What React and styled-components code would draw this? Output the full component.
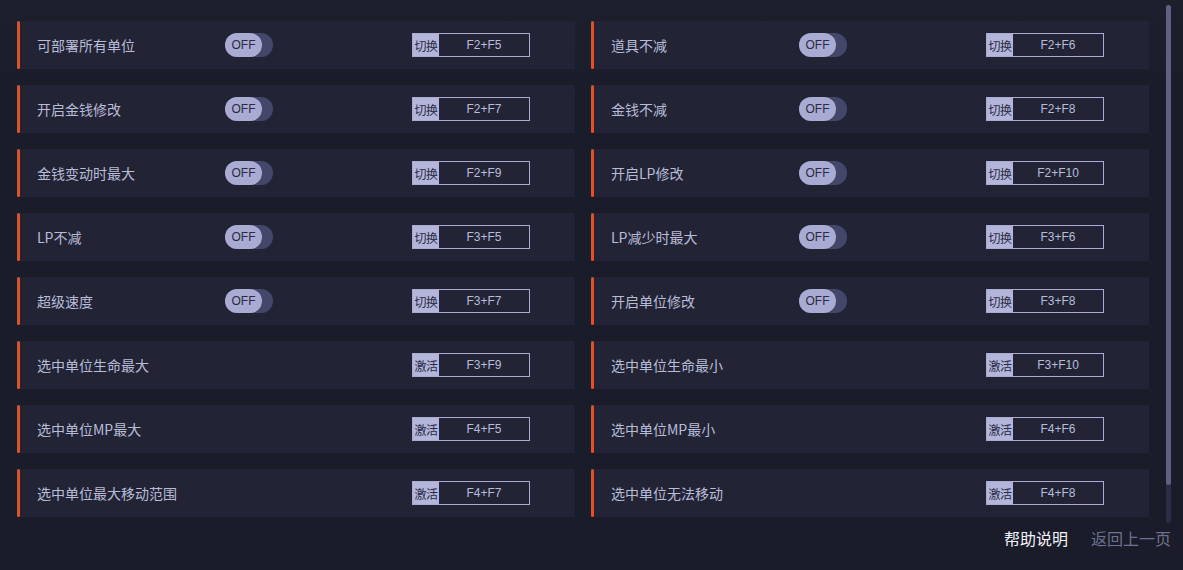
import React from "react";
import styled, { createGlobalStyle } from "styled-components";

const Global = createGlobalStyle`
  html, body { margin: 0; padding: 0; }
  body {
    background: #1a1c2a;
    font-family: "Microsoft YaHei", "Noto Sans CJK SC", "Noto Sans", sans-serif;
    width: 1183px;
    height: 570px;
    overflow: hidden;
  }
`;

const Page = styled.div`
  width: 1183px;
  height: 570px;
  box-sizing: border-box;
  padding-top: 5px;
  background: linear-gradient(180deg, #1d1f2d 0%, #1a1c2a 18%, #1a1c2a 100%);
  display: flex;
  flex-direction: column;
`;

const Main = styled.div`
  display: flex;
  align-items: flex-start;
  gap: 17px;
  padding-left: 17px;
`;

const Grid = styled.div`
  margin-top: 16px;
  display: grid;
  grid-template-columns: 558px 558px;
  column-gap: 16px;
  row-gap: 16px;
`;

const Card = styled.div`
  position: relative;
  height: 48px;
  background: #222436;
  display: flex;
  align-items: center;
  padding-left: 20px;
  box-sizing: border-box;
  &::before {
    content: "";
    position: absolute;
    left: 0;
    top: 0;
    bottom: 0;
    width: 3px;
    border-radius: 2px;
    background: #d9532c;
  }
`;

const Label = styled.div`
  width: 188px;
  font-size: 14px;
  color: #b9bcd6;
  white-space: nowrap;
`;

const Toggle = styled.div`
  width: 48px;
  height: 24px;
  border-radius: 12px;
  background: #44476a;
  display: flex;
  align-items: center;
`;

const Knob = styled.div`
  width: 37px;
  height: 24px;
  border-radius: 12px;
  background: #a9abd3;
  color: #2a2c45;
  font-family: "Liberation Sans", Arial, sans-serif;
  font-size: 12px;
  display: flex;
  align-items: center;
  justify-content: center;
`;

const Spacer = styled.div`
  flex: ${(p) => (p.$grow ? 1 : "none")};
  width: ${(p) => (p.$w ? p.$w + "px" : "auto")};
`;

const Keybind = styled.div`
  margin-left: ${(p) => p.$offset}px;
  width: 118px;
  height: 24px;
  box-sizing: border-box;
  border: 1px solid #a9abd3;
  display: flex;
  align-items: stretch;
`;

const KeyTag = styled.div`
  width: 26px;
  background: #b3b5da;
  color: #2a2c45;
  font-size: 12px;
  display: flex;
  align-items: center;
  justify-content: center;
  white-space: nowrap;
  letter-spacing: -0.5px;
`;

const KeyText = styled.div`
  flex: 1;
  color: #b9bcd6;
  font-family: "Liberation Sans", Arial, sans-serif;
  font-size: 12px;
  display: flex;
  align-items: center;
  justify-content: center;
`;

const ScrollTrack = styled.div`
  width: 5px;
  height: 518px;
  border-radius: 3px;
  background: #2b2d44;
  display: flex;
  flex-direction: column;
`;

const ScrollThumb = styled.div`
  height: 480px;
  border-radius: 3px;
  background: #5e6182;
`;

const Footer = styled.div`
  display: flex;
  justify-content: flex-end;
  gap: 23px;
  padding-right: 12px;
  margin-top: 4px;
`;

const FooterLink = styled.div`
  font-size: 16px;
  line-height: 22px;
  color: ${(p) => (p.$active ? "#f2f3fa" : "#6e7190")};
  cursor: pointer;
`;

const items = [
  ["可部署所有单位", true, "切换", "F2+F5"],
  ["道具不减", true, "切换", "F2+F6"],
  ["开启金钱修改", true, "切换", "F2+F7"],
  ["金钱不减", true, "切换", "F2+F8"],
  ["金钱变动时最大", true, "切换", "F2+F9"],
  ["开启LP修改", true, "切换", "F2+F10"],
  ["LP不减", true, "切换", "F3+F5"],
  ["LP减少时最大", true, "切换", "F3+F6"],
  ["超级速度", true, "切换", "F3+F7"],
  ["开启单位修改", true, "切换", "F3+F8"],
  ["选中单位生命最大", false, "激活", "F3+F9"],
  ["选中单位生命最小", false, "激活", "F3+F10"],
  ["选中单位MP最大", false, "激活", "F4+F5"],
  ["选中单位MP最小", false, "激活", "F4+F6"],
  ["选中单位最大移动范围", false, "激活", "F4+F7"],
  ["选中单位无法移动", false, "激活", "F4+F8"],
];

export default function App() {
  return (
    <>
      <Global />
      <Page>
        <Main>
          <Grid>
            {items.map(([label, toggle, tag, key]) => (
              <Card key={label}>
                <Label>{label}</Label>
                {toggle ? (
                  <Toggle>
                    <Knob>OFF</Knob>
                  </Toggle>
                ) : (
                  <Spacer $w={48} />
                )}
                <Keybind $offset={139}>
                  <KeyTag>{tag}</KeyTag>
                  <KeyText>{key}</KeyText>
                </Keybind>
              </Card>
            ))}
          </Grid>
          <ScrollTrack>
            <ScrollThumb />
          </ScrollTrack>
        </Main>
        <Footer>
          <FooterLink $active>帮助说明</FooterLink>
          <FooterLink>返回上一页</FooterLink>
        </Footer>
      </Page>
    </>
  );
}
